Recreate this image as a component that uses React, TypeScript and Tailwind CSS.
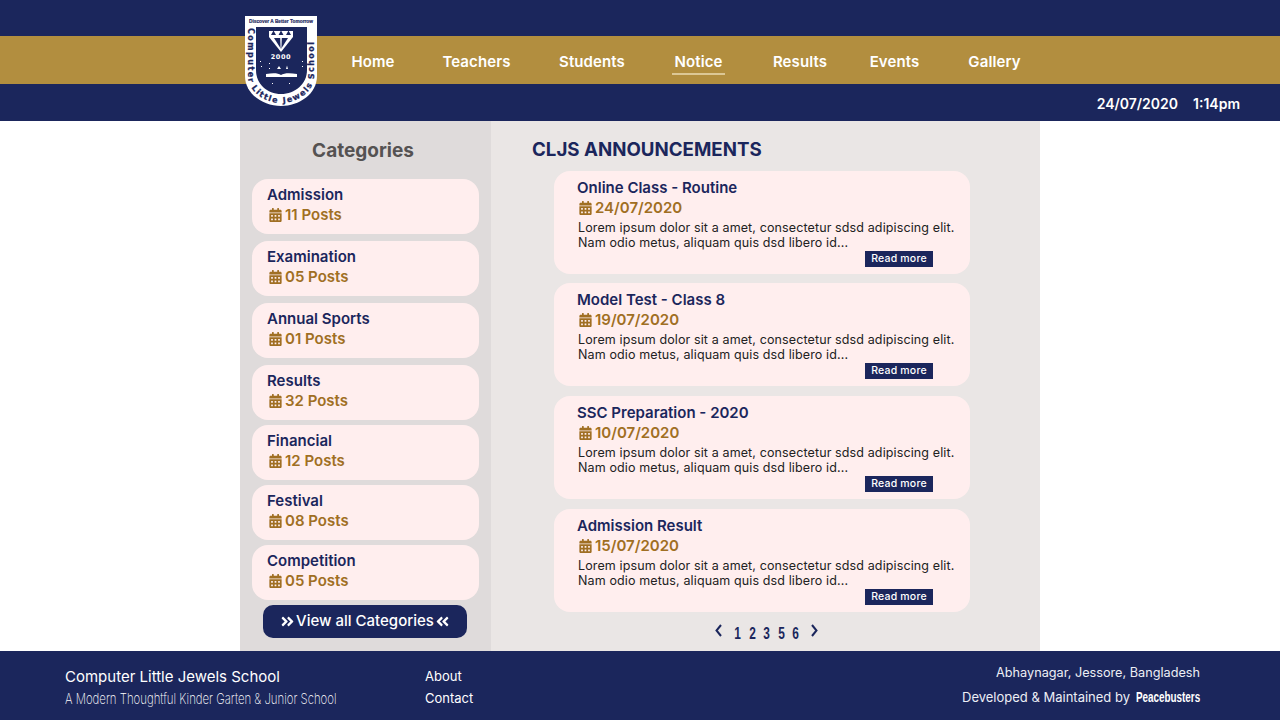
import React from 'react';
import { FaAngleDoubleLeft, FaAngleDoubleRight, FaCalendarAlt } from 'react-icons/fa';

const navItems = [
  { label: 'Home', cell: 'w-[66px]' },
  { label: 'Teachers', cell: 'w-[141px]' },
  { label: 'Students', cell: 'w-[90px]' },
  { label: 'Notice', cell: 'w-[123px]', active: true },
  { label: 'Results', cell: 'w-[80px]' },
  { label: 'Events', cell: 'w-[109px]' },
  { label: 'Gallery', cell: 'w-[91px]' },
];

const categories = [
  { name: 'Admission', posts: '11 Posts', gap: 'mb-[7px]' },
  { name: 'Examination', posts: '05 Posts', gap: 'mb-[7px]' },
  { name: 'Annual Sports', posts: '01 Posts', gap: 'mb-[7px]' },
  { name: 'Results', posts: '32 Posts', gap: 'mb-[5px]' },
  { name: 'Financial', posts: '12 Posts', gap: 'mb-[5px]' },
  { name: 'Festival', posts: '08 Posts', gap: 'mb-[5px]' },
  { name: 'Competition', posts: '05 Posts', gap: 'mb-[5px]' },
];

const notices = [
  { title: 'Online Class - Routine', date: '24/07/2020', gap: 'mb-[9px]' },
  { title: 'Model Test - Class 8', date: '19/07/2020', gap: 'mb-[10px]' },
  { title: 'SSC Preparation - 2020', date: '10/07/2020', gap: 'mb-[10px]' },
  { title: 'Admission Result', date: '15/07/2020', gap: 'mb-[10px]' },
];

function Logo() {
  return (
    <svg viewBox="0 0 72 90" className="absolute left-[245px] top-4 w-[72px] h-[90px]">
      <path d="M0 0H72V60C72 78 54 90 36 90C18 90 0 78 0 60Z" fill="#fff" />
      <path d="M11 11H62V54C62 68 50 78 36 78C22 78 11 68 11 54Z" fill="#1b265c" />
      <defs>
        <path id="crest-ring" d="M3 12V60C3 76 20 87 36 87C52 87 69 76 69 60V12" fill="none" />
      </defs>
      <text x="36" y="7" textAnchor="middle" fontSize="6" fontWeight="700" textLength="64" lengthAdjust="spacingAndGlyphs" fill="#1b265c" stroke="#1b265c" strokeWidth="0.2" fontFamily="'Liberation Sans', sans-serif">
        Discover A Better Tomorrow
      </text>
      <text fontSize="8" fontWeight="700" fill="#1b265c" stroke="#1b265c" strokeWidth="0.25" fontFamily="'DejaVu Sans', sans-serif">
        <textPath href="#crest-ring" textLength="176" lengthAdjust="spacing">Computer Little Jewels School</textPath>
      </text>
      <path d="M24 15H48V21L36 36L24 21Z" fill="#fff" />
      <path d="M29 22H43L36 33Z" fill="#1b265c" />
      <path d="M35.2 22H36.8L36.4 33H35.6Z" fill="#fff" />
      <path d="M26 19L28.5 14.5L31 19ZM33.5 19L36 14.5L38.5 19ZM41 19L43.5 14.5L46 19Z" fill="#1b265c" />
      <text x="36" y="43" textAnchor="middle" fontSize="6.5" fontWeight="700" letterSpacing="0.6" fill="#fff" fontFamily="'DejaVu Sans', sans-serif">
        2000
      </text>
      <path d="M21 58C28 57 33 57 36 59C39 57 45 57 52 58V61H21Z" fill="#fff" />
      <path d="M32 53L34 50L36 53ZM41 53L42 49.5L43 53Z" fill="#fff" />
      <g fill="#fff">
        <rect x="15" y="45" width="1" height="1" />
        <rect x="16" y="50" width="1" height="1" />
        <rect x="24" y="47" width="1" height="1" />
        <rect x="24" y="52" width="1" height="1" />
        <rect x="57" y="45" width="1" height="1" />
        <rect x="57" y="50" width="1" height="1" />
        <rect x="27" y="67" width="1" height="1" />
        <rect x="44" y="67" width="1" height="1" />
      </g>
    </svg>
  );
}

function Header() {
  return (
    <header className="relative text-white font-semibold">
      <div className="h-9 bg-[#1b265c]" />
      <nav className="h-12 bg-[#b28e3f] flex items-start pt-[16px] pl-[340px]">
        {navItems.map((item) => (
          <div key={item.label} className={`${item.cell} flex justify-center`}>
            <a
              href="#"
              className={`text-[15px] tracking-[0.1px] leading-[20px] px-[3px] ${item.active ? 'border-b-2 border-[#dcc795] pb-px' : ''}`}
            >
              {item.label}
            </a>
          </div>
        ))}
      </nav>
      <div className="h-[37px] bg-[#1b265c] flex items-center justify-end gap-[15px] pr-10 pt-[2px] text-[14px]">
        <span>24/07/2020</span>
        <span>1:14pm</span>
      </div>
      <Logo />
    </header>
  );
}

function Sidebar() {
  return (
    <aside className="w-[251px] bg-[#dfdbdb] px-3 flex flex-col">
      <h2 className="text-center text-[19px] font-bold text-[#555252] leading-[24px] pt-[18px] pr-[5px] mb-[16px]">Categories</h2>
      {categories.map((cat) => (
        <div key={cat.name} className={`h-[55px] ${cat.gap} bg-[#ffeeee] rounded-2xl pl-[15px] pt-[6px]`}>
          <div className="text-[15px] font-semibold leading-[20px] text-[#1b265c]">{cat.name}</div>
          <div className="flex items-center gap-[3px] pl-[2px] text-[15px] font-semibold leading-[20px] text-[#a06f23]">
            <FaCalendarAlt className="w-[13px] h-[14px]" />
            {cat.posts}
          </div>
        </div>
      ))}
      <button className="ml-[11px] w-[204px] h-[33px] rounded-[10px] bg-[#1b265c] text-white text-[15px] font-medium flex items-center justify-center gap-px">
        <FaAngleDoubleRight className="w-[15px] h-[15px]" />
        View all Categories
        <FaAngleDoubleLeft className="w-[15px] h-[15px]" />
      </button>
    </aside>
  );
}

function NoticeCard({ title, date, gap }: { title: string; date: string; gap: string }) {
  return (
    <article className={`relative w-[416px] h-[103px] ${gap} bg-[#ffeeee] rounded-2xl pl-[23px] pt-[7px]`}>
      <h3 className="text-[15px] font-semibold leading-[20px] text-[#1b265c]">{title}</h3>
      <div className="flex items-center gap-[3px] pl-[2px] text-[15px] font-semibold leading-[20px] text-[#a06f23]">
        <FaCalendarAlt className="w-[13px] h-[14px]" />
        {date}
      </div>
      <p className="pl-px text-[12.5px] tracking-[0.12px] leading-[15px] text-[#222] mt-[2px]">
        Lorem ipsum dolor sit a amet, consectetur sdsd adipiscing elit.
        <br />
        Nam odio metus, aliquam quis dsd libero id...
      </p>
      <a href="#" className="absolute left-[311px] top-[80px] w-[68px] h-4 bg-[#1b265c] text-white text-[10.5px] tracking-[0.2px] font-medium leading-[15px] text-center">
        Read more
      </a>
    </article>
  );
}

function PageArrow({ d, className }: { d: string; className: string }) {
  return (
    <svg viewBox="0 0 7 13" className={`w-[7px] h-[13px] -translate-y-[2px] ${className}`} fill="none" stroke="currentColor" strokeWidth="2">
      <path d={d} />
    </svg>
  );
}

function Notices() {
  return (
    <section className="flex-1 bg-[#eae6e5] pl-[41px]">
      <h2 className="text-[18.7px] font-bold leading-[24px] text-[#1b265c] pt-[17px] mb-[9px]">CLJS ANNOUNCEMENTS</h2>
      <div className="ml-[22px]">
        {notices.map((n) => (
          <NoticeCard key={n.title} {...n} />
        ))}
        <div className="w-[416px] flex items-center gap-[5.6px] pl-[161px] h-[20px] text-[#1b265c] text-[16.5px] font-bold font-['Liberation_Sans',sans-serif]">
          <PageArrow d="M6 1L1.5 6.5L6 12" className="mr-[5.4px]" />
          {['1', '2', '3', '5', '6'].map((p) => (
            <span key={p} className="w-[9px] text-center scale-x-[0.72] translate-y-px">{p}</span>
          ))}
          <PageArrow d="M1 1L5.5 6.5L1 12" className="ml-[5px]" />
        </div>
      </div>
    </section>
  );
}

function Footer() {
  return (
    <footer className="h-[69px] bg-[#1b265c] text-white flex pl-[65px] pr-[80px]">
      <div className="w-[360px] pt-[16px]">
        <div className="text-[15px] leading-[20px]">Computer Little Jewels School</div>
        <div className="text-[15px] leading-[20px] mt-[2px] font-extralight whitespace-nowrap origin-left scale-x-[0.76]">
          A Modern Thoughtful Kinder Garten &amp; Junior School
        </div>
      </div>
      <div className="pt-[15px] text-[13px] leading-[20px] flex flex-col gap-[2px]">
        <a href="#">About</a>
        <a href="#">Contact</a>
      </div>
      <div className="ml-auto pt-[12px] text-[12.7px] leading-[20px] text-right text-[#eceef5]">
        <div>Abhaynagar, Jessore, Bangladesh</div>
        <div className="flex items-center justify-end gap-[6px] mt-[4px] text-[13px]">
          Developed &amp; Maintained by
          <span className="w-[64px] text-left whitespace-nowrap">
            <span className="inline-block origin-left scale-x-[0.705] text-[14px] font-bold text-white font-['Liberation_Sans',sans-serif]">Peacebusters</span>
          </span>
        </div>
      </div>
    </footer>
  );
}

export default function App() {
  return (
    <div className="w-[1280px] h-[720px] overflow-hidden bg-white font-['Inter','Liberation_Sans',sans-serif]">
      <Header />
      <main className="w-[800px] h-[530px] mx-auto flex">
        <Sidebar />
        <Notices />
      </main>
      <Footer />
    </div>
  );
}
